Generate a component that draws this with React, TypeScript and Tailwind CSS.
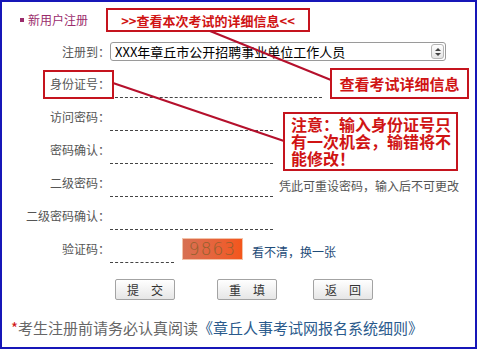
const cjk = "font-['Noto_Sans_CJK_SC','Noto_Sans',sans-serif]";

function Row({ label, children }: { label: string; children?: React.ReactNode }) {
  return (
    <div className="flex h-[33px]">
      <div className="flex w-[108px] items-center justify-end text-[12px] leading-none text-[#555]">{label}</div>
      {children}
    </div>
  );
}

function DashInput({ w }: { w: string }) {
  return <div className={`h-[31px] border-b border-dashed border-[#444] ${w}`} />;
}

function Btn({ text }: { text: string }) {
  return (
    <div className="flex h-[21px] w-[60px] items-center justify-center rounded-[2px] border border-[#a3a3a3] bg-gradient-to-b from-white to-[#e6e6e6] text-[12px] leading-none text-[#333]">
      {text}
    </div>
  );
}

export default function App() {
  return (
    <div className={`h-[353px] w-[478px] bg-white ${cjk}`}>
      <div className="relative h-[349px] w-[477px] border-2 border-[#1616b8] bg-white">
        {/* header */}
        <div className="mt-[6px] flex h-[24px] items-center">
          <div className="flex w-[104px] items-center pl-[18px] text-[12px] leading-none text-[#9b2c6c]">
            <span className="mr-[4px] inline-block h-[4px] w-[4px] bg-[#9b2c6c]" />
            新用户注册
          </div>
          <div className="flex h-[24px] w-[204px] items-center justify-center border-2 border-[#c5141e] text-[13px] font-bold leading-none text-[#d01414]">
            &gt;&gt;查看本次考试的详细信息&lt;&lt;
          </div>
        </div>

        {/* exam select */}
        <div className="mt-[10px] flex h-[19px]">
          <div className="flex w-[108px] items-center justify-end text-[12px] leading-none text-[#555]">注册到：</div>
          <div className="flex h-[19px] w-[336px] items-center justify-between rounded-[3px] border border-[#9a9a9a] bg-white pl-[4px] pr-[1px] text-[13px] leading-none text-black">
            <span>XXX年章丘市公开招聘事业单位工作人员</span>
            <div className="flex h-[15px] w-[13px] flex-col items-center justify-center gap-[2px] rounded-[3px] border border-[#b5b5b5] bg-gradient-to-b from-white to-[#e4e4e4]">
              <span className="h-0 w-0 border-x-[3px] border-b-[3px] border-x-transparent border-b-[#444]" />
              <span className="h-0 w-0 border-x-[3px] border-t-[3px] border-x-transparent border-t-[#444]" />
            </div>
          </div>
        </div>

        <div className="mt-[6px]">
          <Row label="身份证号：">
            <DashInput w="w-[212px]" />
          </Row>
          <Row label="访问密码：">
            <DashInput w="w-[163px]" />
          </Row>
          <Row label="密码确认：">
            <DashInput w="w-[163px]" />
          </Row>
          <Row label="二级密码：">
            <DashInput w="w-[163px]" />
            <span className="ml-[6px] pt-[14px] text-[12px] leading-none text-[#555]">凭此可重设密码，输入后不可更改</span>
          </Row>
          <Row label="二级密码确认：">
            <DashInput w="w-[163px]" />
          </Row>
          <Row label="验证码：">
            <DashInput w="w-[64px]" />
            <div className="ml-[8px] mt-[6px] flex h-[22px] w-[61px] items-center justify-center border border-[#f2c2a8] bg-gradient-to-r from-[#d77052] to-[#f4561a] font-['DejaVu_Sans',sans-serif] text-[17px] font-light leading-none tracking-[1px] text-[#94602e]">
              9863
            </div>
            <span className="ml-[9px] pt-[14px] text-[12px] leading-none text-[#1e4c78]">看不清，换一张</span>
          </Row>
        </div>

        {/* buttons */}
        <div className="mt-[14px] flex pl-[113px]">
          <Btn text="提　交" />
          <div className="ml-[42px]"><Btn text="重　填" /></div>
          <div className="ml-[36px]"><Btn text="返　回" /></div>
        </div>

        {/* footer */}
        <div className="mt-[18px] pl-[9px] text-[15px] leading-[20px] text-[#666]">
          <span className="text-[#d01414]">*</span>考生注册前请务必认真阅读<span className="text-[#2a5a8c]">《章丘人事考试网报名系统细则》</span>
        </div>

        {/* annotations */}
        <svg className="pointer-events-none absolute left-[-2px] top-[-2px]" width="478" height="353">
          <line x1="210" y1="31" x2="331" y2="80" stroke="#b5102c" strokeWidth="2" />
          <line x1="113" y1="83" x2="284" y2="141" stroke="#b5102c" strokeWidth="2" />
        </svg>
        <div className="absolute left-[41px] top-[68px] h-[29px] w-[71px] border-2 border-[#c5141e]" />
        <div className="absolute left-[328px] top-[66px] flex h-[31px] w-[139px] items-center justify-center border-2 border-[#c5141e] bg-white text-[15px] font-bold leading-none text-[#d01414]">
          查看考试详细信息
        </div>
        <div className="absolute left-[281px] top-[110px] h-[59px] w-[175px] border-2 border-[#c5141e] bg-white pl-[6px] pt-[2px] text-[16px] font-bold leading-[17px] text-[#d01414]">
          注意：输入身份证号只有一次机会，输错将不能修改！
        </div>
      </div>
    </div>
  );
}
